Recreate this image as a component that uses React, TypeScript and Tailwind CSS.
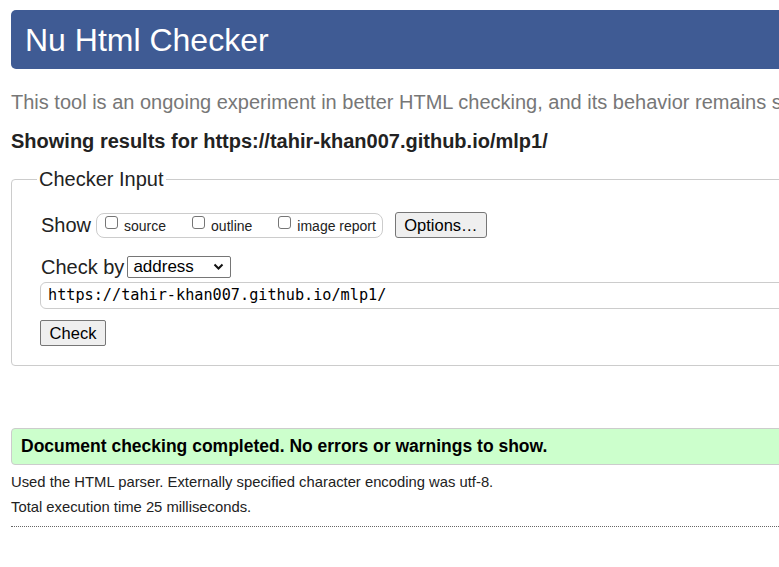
import React from "react";

const SANS = "font-['Liberation_Sans',Arial,sans-serif]";

function ShowOptions() {
  const items = ["source", "outline", "image report"];
  return (
    <div className="ml-[5px] flex h-[25px] items-center rounded-[8px] border border-[#cccccc] pl-[8px] pr-[6px]">
      {items.map((label, i) => (
        <label
          key={label}
          className={`flex items-center text-[14px] leading-[16px] text-[#222] ${i > 0 ? "ml-[26px]" : ""}`}
        >
          <span className="mr-[6px] -mt-[5px] inline-block h-[13px] w-[13px] rounded-[3px] border border-[#767676] bg-white" />
          <span className="mt-[2px]">{label}</span>
        </label>
      ))}
    </div>
  );
}

export default function App() {
  return (
    <div className={`h-[567px] w-[779px] overflow-hidden bg-white ${SANS}`}>
      <div className="w-[1000px] px-[11px] pt-[10px]">
        <h1 className="flex h-[59px] items-center rounded-[5px] bg-[#3f5b94] pl-[14px] text-[32px] leading-none text-white">
          Nu Html Checker
        </h1>

        <p className="mt-[21px] whitespace-nowrap text-[20px] leading-[24px] text-[#777]">
          This tool is an ongoing experiment in better HTML checking, and its behavior remains subject to change
        </p>

        <p className="mt-[15px] whitespace-nowrap text-[20px] font-bold leading-[24px] text-[#222]">
          Showing results for https://tahir-khan007.github.io/mlp1/
        </p>

        <fieldset className="mt-[15px] rounded-[4px] border border-[#cccccc] px-0 pb-[19px]">
          <legend className="ml-[25px] px-[2px] text-[20px] leading-[22px] text-[#222]">
            Checker Input
          </legend>

          <div className="pl-[29px]">
            <div className="mt-[22px] flex h-[26px] items-center">
              <span className="text-[20px] leading-[22px] text-[#222]">Show</span>
              <ShowOptions />
              <button className="ml-[12px] h-[26px] w-[92px] rounded-[3px] border border-[#767676] bg-[#efefef] text-[16.5px] text-black">
                Options…
              </button>
            </div>

            <div className="mt-[18px] flex h-[22px] items-center">
              <span className="text-[20px] leading-[22px] text-[#222]">Check by</span>
              <div className="ml-[3px] flex h-[22px] w-[104px] items-center justify-between rounded-[2px] border border-[#767676] pl-[5px] pr-[6px] text-[17px] leading-[20px] text-black">
                address
                <svg width="11" height="8" viewBox="0 0 11 8" fill="none">
                  <path d="M1.5 1.5 L5.5 5.5 L9.5 1.5" stroke="#111" strokeWidth="2" />
                </svg>
              </div>
            </div>

            <div className="mt-[4px] -ml-[1px] flex h-[27px] items-center rounded-[6px] border border-[#cccccc] pl-[7px] font-['DejaVu_Sans_Mono',monospace] text-[15.2px] text-black">
              https://tahir-khan007.github.io/mlp1/
            </div>

            <button className="mt-[11px] -ml-[1px] block h-[26px] w-[66px] rounded-[2px] border border-[#767676] bg-[#efefef] text-[16.5px] text-black">
              Check
            </button>
          </div>
        </fieldset>

        <div className="mt-[62px] flex h-[37px] items-center rounded-[4px] border border-[#cccccc] bg-[#ccffcc] pl-[9px] text-[17.5px] font-bold text-black">
          Document checking completed. No errors or warnings to show.
        </div>

        <p className="mt-[7px] text-[14.8px] leading-[20px] text-[#222]">
          Used the HTML parser. Externally specified character encoding was utf-8.
        </p>
        <p className="mt-[5px] text-[14.8px] leading-[20px] text-[#222]">
          Total execution time 25 milliseconds.
        </p>
        <hr className="mt-[9px] border-0 border-t border-dotted border-[#666]" />
      </div>
    </div>
  );
}
